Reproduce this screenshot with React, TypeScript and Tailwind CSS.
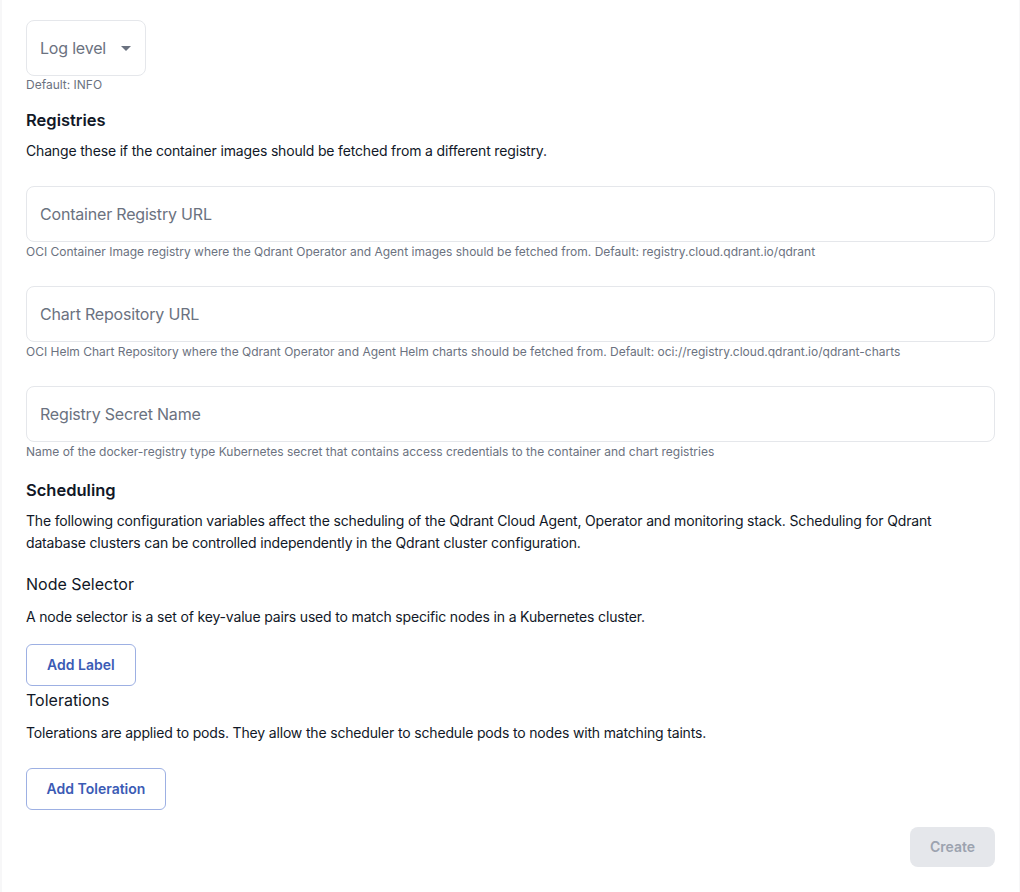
import { ChangeEvent, useState } from 'react';

const font = { fontFamily: 'Inter, "Noto Sans", sans-serif' };

function TextField({ placeholder, helper }: { placeholder: string; helper: string }) {
  const [value, setValue] = useState('');
  return (
    <div className="flex flex-col">
      <input
        value={value}
        onChange={(e: ChangeEvent<HTMLInputElement>) => setValue(e.target.value)}
        placeholder={placeholder}
        className="h-14 w-full rounded-lg border border-[#e5e7eb] bg-white px-[13px] text-base tracking-[-0.012em] text-[#111827] placeholder:text-[#6b7280] focus:outline-none"
      />
      <p className="mt-[2px] text-xs leading-4 text-[#6b7280]">{helper}</p>
    </div>
  );
}

export default function App() {
  return (
    <div className="min-h-[892px] bg-white border-l-2 border-r border-[#f7f7f8]" style={font}>
      <div className="flex flex-col pt-5 pl-6 pr-6 pb-6 text-[#111827]">
        {/* 日志级别 */}
        <div className="flex flex-col items-start">
          <button className="flex h-14 w-[120px] items-center justify-between rounded-lg border border-[#e5e7eb] bg-white pl-[13px] pr-[13px] text-base tracking-[-0.012em] text-[#6b7280]">
            <span>Log level</span>
            <svg width="10" height="5" viewBox="0 0 10 5" className="mr-[1px]">
              <path d="M0 0 L10 0 L5 5 Z" fill="#6b7280" />
            </svg>
          </button>
          <p className="mt-[1px] text-xs leading-4 text-[#6b7280]">Default: INFO</p>
        </div>

        {/* Registries */}
        <h2 className="mt-[15px] text-[16.5px] font-semibold leading-6">Registries</h2>
        <p className="mt-[9px] text-sm leading-5 tracking-[-0.012em]">
          Change these if the container images should be fetched from a different registry.
        </p>

        <div className="mt-[25px] flex flex-col gap-[26px]">
          <TextField
            placeholder="Container Registry URL"
            helper="OCI Container Image registry where the Qdrant Operator and Agent images should be fetched from. Default: registry.cloud.qdrant.io/qdrant"
          />
          <TextField
            placeholder="Chart Repository URL"
            helper="OCI Helm Chart Repository where the Qdrant Operator and Agent Helm charts should be fetched from. Default: oci://registry.cloud.qdrant.io/qdrant-charts"
          />
          <TextField
            placeholder="Registry Secret Name"
            helper="Name of the docker-registry type Kubernetes secret that contains access credentials to the container and chart registries"
          />
        </div>

        {/* Scheduling */}
        <h2 className="mt-[18px] text-[16.5px] font-semibold leading-6">Scheduling</h2>
        <p className="mt-[8px] max-w-[940px] text-sm leading-[22px] tracking-[-0.012em]">
          The following configuration variables affect the scheduling of the Qdrant Cloud Agent, Operator and monitoring stack. Scheduling for Qdrant database clusters can be controlled independently in the Qdrant cluster configuration.
        </p>

        <h3 className="mt-[18px] text-base font-normal leading-6">Node Selector</h3>
        <p className="mt-[11px] text-sm leading-5 tracking-[-0.012em]">
          A node selector is a set of key-value pairs used to match specific nodes in a Kubernetes cluster.
        </p>
        <div className="mt-[17px]">
          <button className="h-[42px] rounded-md border border-[#9db0e3] px-5 text-sm font-semibold text-[#3b5bb5]">
            Add Label
          </button>
        </div>

        <h3 className="mt-[2px] text-base font-normal leading-6">Tolerations</h3>
        <p className="mt-[11px] text-sm leading-5 tracking-[-0.012em]">
          Tolerations are applied to pods. They allow the scheduler to schedule pods to nodes with matching taints.
        </p>
        <div className="mt-[25px]">
          <button className="h-[42px] w-[140px] rounded-md border border-[#9db0e3] text-sm font-semibold text-[#3b5bb5]">
            Add Toleration
          </button>
        </div>

        <div className="mt-[17px] flex justify-end">
          <button disabled className="h-10 w-[85px] rounded-lg bg-[#e5e7eb] text-sm font-semibold text-[#9ca3af]">
            Create
          </button>
        </div>
      </div>
    </div>
  );
}
